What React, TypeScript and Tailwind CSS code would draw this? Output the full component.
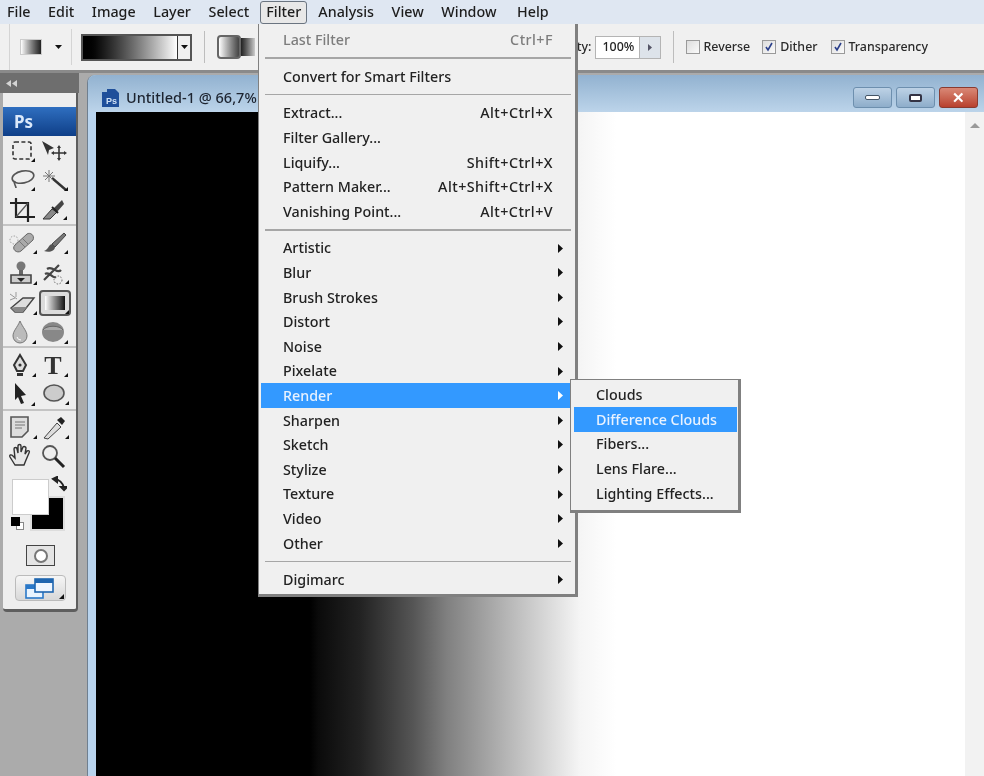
import React from "react";

const F = "[font-family:'Noto_Sans','Open_Sans',sans-serif]";

function Tri({ x, y }: { x: number; y: number }) {
  return <path d={`M${x} ${y}h4v-4z`} fill="#111" />;
}

const icons: React.ReactNode[] = [
  <g key="marquee"><rect x="6" y="4" width="18" height="17" rx="2" fill="none" stroke="#333" strokeWidth="1.6" strokeDasharray="4 2.4" /><Tri x={24} y={24} /></g>,
  <g key="move"><path d="M3 3l12 7-5 2-1 5z" fill="#333" /><path d="M20 9v12M14 15h12" stroke="#333" strokeWidth="1.6" /><path d="M20 7l2 3h-4zM20 23l2-3h-4zM12 15l3-2v4zM28 15l-3-2v4z" fill="#333" /></g>,
  <g key="lasso"><ellipse cx="16" cy="10" rx="11" ry="6" transform="rotate(-12 16 10)" fill="none" stroke="#555" strokeWidth="1.6" /><path d="M8 14c-2 3 1 4 1 7" fill="none" stroke="#555" strokeWidth="1.6" /><Tri x={24} y={24} /></g>,
  <g key="wand"><path d="M13 11l14 12" stroke="#333" strokeWidth="2.4" /><path d="M10 3v12M4 9h12M6 5l8 8M14 5l-8 8" stroke="#777" strokeWidth="1" /><Tri x={25} y={24} /></g>,
  <g key="crop"><path d="M9 2v19h19M3 7h18v19" fill="none" stroke="#222" strokeWidth="2.2" /><path d="M9 21L21 7" stroke="#555" strokeWidth="1.2" /></g>,
  <g key="slice"><path d="M4 23l9-10 5 3-7 7z" fill="#888" stroke="#333" /><path d="M14 13L23 4l2 4-7 8" fill="#444" /><path d="M19 17l-6-6" stroke="#222" strokeWidth="2" /><Tri x={24} y={24} /></g>,
  <g key="heal"><path d="M8 15L20 4c3-2 8 1 6 6L14 21c-4 3-10-2-6-6z" fill="#aaa" stroke="#666" /><path d="M12 11l6 6M15 8l6 6" stroke="#777" /><circle cx="7" cy="10" r="4" fill="none" stroke="#999" strokeDasharray="1.5 1.5" /><Tri x={26} y={24} /></g>,
  <g key="brush"><path d="M25 3L13 14l3 3L27 5z" fill="#777" stroke="#444" /><path d="M13 14c-4 1-3 5-8 7 5 2 11 0 11-4z" fill="#555" /><Tri x={25} y={24} /></g>,
  <g key="stamp"><circle cx="14" cy="6" r="4.5" fill="#777" /><path d="M12 10h4v5h-4z" fill="#666" /><path d="M4 15h20v8H4z" fill="#ccc" stroke="#444" strokeWidth="1.6" /><path d="M10 18h8l-4 4z" fill="#222" /><Tri x={26} y={25} /></g>,
  <g key="history"><path d="M5 20L20 5M8 9c6-4 10 6 14 1M6 14c5-3 7 5 11 3" stroke="#444" strokeWidth="2.2" fill="none" /><circle cx="19" cy="20" r="4" fill="none" stroke="#666" strokeDasharray="1.5 1.5" /><Tri x={26} y={24} /></g>,
  <g key="eraser"><path d="M4 18l12-10h11l-11 14H8z" fill="#ddd" stroke="#444" strokeWidth="1.4" /><path d="M4 18l4 4h8l4-5H8z" fill="#888" /><path d="M3 4l7 5M9 2v5M3 10l5-2" stroke="#999" /><Tri x={26} y={25} /></g>,
  <g key="gradient"><rect x="1" y="1" width="30" height="24" rx="3" fill="#dcdcdc" stroke="#555" strokeWidth="2" /><defs><linearGradient id="tg"><stop offset="0" stopColor="#fff" /><stop offset="1" stopColor="#111" /></linearGradient></defs><rect x="6" y="6" width="20" height="14" fill="url(#tg)" /><Tri x={26} y={24} /></g>,
  <g key="drop"><path d="M13 2c3 7 7 10 7 15a7 7 0 0 1-14 0c0-5 4-8 7-15z" fill="#bbb" stroke="#777" /><path d="M10 18a4 4 0 0 0 4 3" stroke="#fff" fill="none" /><Tri x={25} y={25} /></g>,
  <g key="burn"><ellipse cx="14" cy="13" rx="11" ry="10" fill="#888" /><path d="M4 11c3-5 17-5 20 0" fill="#aaa" stroke="#666" /><Tri x={25} y={25} /></g>,
  <g key="pen"><path d="M13 3l6 10-3 6h-6l-3-6z" fill="#ddd" stroke="#333" strokeWidth="2" /><circle cx="13" cy="13" r="1.6" fill="#333" /><path d="M10 21h6v3h-6z" fill="#333" /><Tri x={25} y={25} /></g>,
  <g key="type"><text x="14" y="22" fontFamily="Liberation Serif" fontSize="26" fontWeight="700" fill="#333" textAnchor="middle">T</text><Tri x={25} y={25} /></g>,
  <g key="arrow"><path d="M8 2l11 12-5 1 3 7-3 1-3-7-3 3z" fill="#222" /><Tri x={24} y={25} /></g>,
  <g key="ellipse"><ellipse cx="15" cy="12" rx="10" ry="8" fill="#ccc" stroke="#555" strokeWidth="1.6" /><Tri x={26} y={24} /></g>,
  <g key="note"><path d="M4 3h17v14l-6 6H4z" fill="#ddd" stroke="#555" strokeWidth="1.6" /><path d="M8 8h10M8 11h10M8 14h7" stroke="#777" /><Tri x={26} y={25} /></g>,
  <g key="dropper"><path d="M5 24l13-15 4 4L9 25z" fill="#ddd" stroke="#444" /><path d="M18 6l4-3 4 4-3 4z" fill="#222" /><Tri x={26} y={25} /></g>,
  <g key="hand"><path d="M8 22L3 14c-1-2 1-3 3-1l2 2-1-9c0-2 3-2 3 0l1 4V3c0-2 3-2 3 0v6l2-5c1-1 3 0 3 1l-1 6 2-3c2-1 3 0 2 2l-3 7-2 5z" fill="#e8e8e8" stroke="#333" strokeWidth="1.4" /></g>,
  <g key="zoom"><circle cx="11" cy="10" r="7" fill="#eee" stroke="#555" strokeWidth="1.8" /><path d="M16 15l9 9" stroke="#222" strokeWidth="3" /></g>,
];

function Tool({ i }: { i: number }) {
  return (
    <svg width="32" height="28" viewBox="0 0 32 28" className="block">
      {icons[i]}
    </svg>
  );
}

function ToolRow({ a, h = 29 }: { a: number; h?: number }) {
  return (
    <div className="flex pl-[4px]" style={{ height: h }}>
      <Tool i={a} />
      <Tool i={a + 1} />
    </div>
  );
}

function Sep() {
  return <div className="my-[1px] h-[2px] bg-[#c4c4c4]" />;
}

function ToolPanel() {
  return (
    <div className="w-[79px] shrink-0">
      <div className="flex h-[20px] items-center bg-[#6e6e6e] pl-[6px]">
        <svg width="12" height="7" viewBox="0 0 12 7"><path d="M5 0v7L0 3.5zM11 0v7L6 3.5z" fill="#d4d4d4" /></svg>
      </div>
      <div className="ml-[3px] h-[519px] w-[75px] rounded-b-[4px] border-r-[2px] border-b-[3px] border-[#5e5e5e] bg-[#eeeeee] pt-[14px]">
        <div className="flex h-[29px] items-center bg-gradient-to-b from-[#2f6fc0] to-[#0f3f88] pl-[11px] text-[17px] font-bold text-[#dbe9fa]">
          Ps
        </div>
        <div className="pt-[2px]">
          <ToolRow a={0} />
          <ToolRow a={2} />
          <ToolRow a={4} h={27} />
          <Sep />
          <div className="h-[3px]" />
          <ToolRow a={6} h={30} />
          <ToolRow a={8} h={30} />
          <ToolRow a={10} />
          <ToolRow a={12} h={26} />
          <Sep />
          <div className="h-[3px]" />
          <ToolRow a={14} />
          <ToolRow a={16} h={27} />
          <Sep />
          <div className="h-[2px]" />
          <ToolRow a={18} />
          <ToolRow a={20} h={33} />
        </div>
        <div className="relative h-[61px]">
          <div className="absolute top-[20px] left-[27px] h-[35px] w-[35px] border-[2px] border-[#ddd] bg-black" />
          <div className="absolute top-[3px] left-[9px] h-[36px] w-[37px] border border-[#ccc] bg-white" />
          <svg className="absolute top-[0px] left-[48px]" width="16" height="16" viewBox="0 0 16 16"><path d="M3 3c5 0 9 4 10 9M2 3l4-2v5zM13 14l-3-3h6z" fill="none" stroke="#222" strokeWidth="2" /></svg>
          <div className="absolute top-[46px] left-[13px] h-[8px] w-[8px] border border-[#888] bg-white" />
          <div className="absolute top-[41px] left-[8px] h-[9px] w-[9px] bg-black" />
        </div>
        <div className="mt-[8px] ml-[23px] flex h-[21px] w-[29px] items-center justify-center border border-[#444] bg-[#e4e4e4]">
          <div className="h-[14px] w-[14px] rounded-full border-[2px] border-[#777] bg-white" />
        </div>
        <div className="relative mt-[9px] ml-[12px] h-[26px] w-[51px] rounded-[4px] border border-[#bbb] bg-gradient-to-b from-[#f6f6f6] to-[#d8d8d8]">
          <svg className="absolute top-[2px] left-[9px]" width="30" height="21" viewBox="0 0 30 21">
            <rect x="1" y="7" width="17" height="13" fill="#e9f4ff" stroke="#2a78c8" strokeWidth="1.6" />
            <path d="M1 7h17v4H1z" fill="#2a78c8" />
            <rect x="10" y="1" width="18" height="13" fill="#eef6ff" stroke="#1f66b0" strokeWidth="1.6" />
            <path d="M10 1h18v4H10z" fill="#1f66b0" />
          </svg>
          <svg className="absolute right-[1px] bottom-[1px]" width="5" height="5"><path d="M0 5h5V0z" fill="#111" /></svg>
        </div>
      </div>
    </div>
  );
}

function WinBtn({ children, cls }: { children: React.ReactNode; cls: string }) {
  return (
    <div className={`flex h-[21px] w-[39px] items-center justify-center rounded-[3px] border ${cls}`}>
      {children}
    </div>
  );
}

function DocWindow() {
  return (
    <div className="mt-[2px] ml-[8px] flex min-w-0 flex-1 flex-col rounded-tl-[8px] border-l border-[#6f7f8f] bg-[#b9d4ee]">
      <div className="flex h-[37px] shrink-0 items-center rounded-tl-[8px] bg-gradient-to-b from-[#92b2d0] to-[#bcd4ea] pt-[8px] pr-[6px] pl-[13px]">
        <svg width="19" height="20" viewBox="0 0 19 20">
          <path d="M1 4h5V1h8l4 4v14H1z" fill="#1f4f9a" />
          <text x="5" y="16" fontFamily="Liberation Sans" fontSize="9" fontWeight="700" fill="#cfe0f5">Ps</text>
        </svg>
        <span className={`ml-[6px] text-[14.5px] font-medium whitespace-nowrap text-[#1d2430] ${F}`}>Untitled-1 @ 66,7%</span>
        <div className="flex-1" />
        <div className="flex gap-[4px]">
          <WinBtn cls="border-[#6d8fae] bg-gradient-to-b from-[#bdd2e6] to-[#8eadca]"><div className="h-[5px] w-[15px] rounded-[2px] border border-[#456] bg-white" /></WinBtn>
          <WinBtn cls="border-[#6d8fae] bg-gradient-to-b from-[#bdd2e6] to-[#8eadca]"><div className="h-[8px] w-[13px] rounded-[2px] border-[2px] border-[#334] bg-white" /></WinBtn>
          <WinBtn cls="border-[#8a3b30] bg-gradient-to-b from-[#d98876] to-[#b8402e]"><span className="text-[15px] leading-none font-bold text-white">✕</span></WinBtn>
        </div>
      </div>
      <div className="ml-[8px] flex min-h-0 flex-1">
        <div className="flex-1 bg-[linear-gradient(90deg,#000_214px,#0a0a0a_222px,#222_264px,#555_317px,#808080_351px,#bbb_417px,#f5f5f5_484px,#fff_520px)]" />
        <div className="flex w-[19px] shrink-0 justify-center bg-[#f2f2f2] pt-[10px]">
          <svg width="10" height="6"><path d="M0 6l5-5 5 5z" fill="#9a9a9a" /></svg>
        </div>
      </div>
    </div>
  );
}

function Caret({ cls = "" }: { cls?: string }) {
  return <svg className={cls} width="7" height="4"><path d="M0 0h7L3.5 4z" fill="#111" /></svg>;
}

function Check({ on, label, mr }: { on?: boolean; label: string; mr: number }) {
  return (
    <div className="flex items-center" style={{ marginRight: mr }}>
      <div className="flex h-[14px] w-[14px] items-center justify-center border border-[#9a9a9a] bg-gradient-to-br from-[#ddd] to-[#fafafa]">
        {on && <svg width="10" height="10" viewBox="0 0 10 10"><path d="M2 5l2 3 4-7" fill="none" stroke="#2a3f8a" strokeWidth="1.6" /></svg>}
      </div>
      <span className="ml-[4px] text-[12.4px] font-medium text-[#2a2a2a]">{label}</span>
    </div>
  );
}

function OptionsBar() {
  return (
    <div className={`flex h-[49px] shrink-0 items-center border-b-[3px] border-[#8a8a8a] bg-[#f0f0f0] ${F}`}>
      <div className="ml-[9px] h-full w-px bg-[#d4d4d4]" />
      <div className="ml-[10px] h-[16px] w-[22px] border border-[#ccc] bg-gradient-to-r from-white to-[#222]" />
      <Caret cls="ml-[13px]" />
      <div className="ml-[9px] h-[36px] w-px bg-[#d4d4d4]" />
      <div className="ml-[9px] flex h-[27px] w-[111px] border-[2px] border-[#555] bg-white">
        <div className="flex-1 bg-gradient-to-r from-black to-white" />
        <div className="flex w-[13px] items-center justify-center border-l border-[#333] bg-[#f0f0f0]"><Caret /></div>
      </div>
      <div className="ml-[12px] h-[32px] w-px bg-[#bdbdbd]" />
      <div className="ml-[12px] h-[24px] w-[24px] rounded-[4px] border-[2px] border-[#666] bg-gradient-to-r from-white to-[#444]" />
      <div className="h-[18px] w-[14px] bg-gradient-to-r from-[#222] to-[#ccc]" />
      <div className="flex-1" />
      <span className="mr-[3px] text-[12.4px] font-medium text-[#2a2a2a]">ty:</span>
      <div className="flex h-[23px] w-[66px] items-center border border-[#b4b4b4] bg-white pl-[7px] text-[12.4px] font-medium text-[#222]">
        <span className="flex-1">100%</span>
        <div className="flex h-full w-[21px] items-center justify-center border-l border-[#b4b4b4] bg-[#dde3ea]">
          <svg width="4" height="7"><path d="M0 0l4 3.5L0 7z" fill="#556" /></svg>
        </div>
      </div>
      <div className="mr-[12px] ml-[12px] h-[32px] w-px bg-[#bdbdbd]" />
      <Check label="Reverse" mr={12} />
      <Check on label="Dither" mr={13} />
      <Check on label="Transparency" mr={56} />
    </div>
  );
}

const bar = ["File", "Edit", "Image", "Layer", "Select", "Filter", "Analysis", "View", "Window", "Help"];

function MenuBar() {
  return (
    <div className={`flex h-[24px] shrink-0 items-center gap-[17.6px] bg-[#dfe7f2] pl-[7px] text-[14.3px] font-medium text-[#1d1d1d] ${F}`}>
      {bar.map((b) =>
        b === "Filter" ? (
          <div key={b} className="-mx-[6.5px] flex h-[23px] items-center rounded-[3px] border-[1.5px] border-[#6a7480] bg-[#e8e8e8] px-[5px]">{b}</div>
        ) : (
          <div key={b} className={b === "Help" ? "ml-[3px]" : ""}>{b}</div>
        ),
      )}
    </div>
  );
}

function Row({ label, right, arrow, hi, dim }: { label: string; right?: string; arrow?: boolean; hi?: boolean; dim?: boolean }) {
  return (
    <div className={`flex h-[24.6px] items-center justify-between pr-[12px] pl-[22px] ${hi ? "bg-[#3399ff] text-[#e8f2ff]" : dim ? "text-[#7d7d7d]" : "text-[#222]"}`}>
      <span>{label}</span>
      {right && <span className="pr-[10px] tracking-[0.45px]">{right}</span>}
      {arrow && <svg width="5" height="9"><path d="M0 0l5 4.5L0 9z" fill={hi ? "#fff" : "#111"} /></svg>}
    </div>
  );
}

function MSep() {
  return <div className="flex h-[12.1px] items-center px-[4px]"><div className="h-[1.5px] w-full bg-[#a6a6a6]" /></div>;
}

function Menus() {
  return (
    <>
      <div className={`absolute top-[24px] left-[258px] h-[573px] w-[320px] border-r-[3px] border-b-[3px] border-l border-[#808080] bg-[#f0f0f0] pt-[3.4px] pb-[3px] pl-[2px] text-[14.3px] font-medium ${F}`}>
        <Row label="Last Filter" right="Ctrl+F" dim />
        <MSep />
        <Row label="Convert for Smart Filters" />
        <MSep />
        <Row label="Extract..." right="Alt+Ctrl+X" />
        <Row label="Filter Gallery..." />
        <Row label="Liquify..." right="Shift+Ctrl+X" />
        <Row label="Pattern Maker..." right="Alt+Shift+Ctrl+X" />
        <Row label="Vanishing Point..." right="Alt+Ctrl+V" />
        <MSep />
        {["Artistic", "Blur", "Brush Strokes", "Distort", "Noise", "Pixelate"].map((m) => <Row key={m} label={m} arrow />)}
        <Row label="Render" arrow hi />
        {["Sharpen", "Sketch", "Stylize", "Texture", "Video", "Other"].map((m) => <Row key={m} label={m} arrow />)}
        <MSep />
        <Row label="Digimarc" arrow />
      </div>
      <div className={`absolute top-[379px] left-[570px] h-[134px] w-[171px] border-t border-r-[3px] border-b-[3px] border-l border-[#808080] bg-[#f0f0f0] pt-[2.6px] pr-[1px] pb-[3px] pl-[3px] text-[14.3px] font-medium ${F}`}>
        <Row label="Clouds" />
        <Row label="Difference Clouds" hi />
        <Row label="Fibers..." />
        <Row label="Lens Flare..." />
        <Row label="Lighting Effects..." />
      </div>
    </>
  );
}

export default function App() {
  return (
    <div className="relative flex h-[776px] w-[984px] flex-col overflow-hidden bg-[#ababab] blur-[0.4px]">
      <MenuBar />
      <OptionsBar />
      <div className="flex min-h-0 flex-1">
        <ToolPanel />
        <DocWindow />
      </div>
      <Menus />
    </div>
  );
}
